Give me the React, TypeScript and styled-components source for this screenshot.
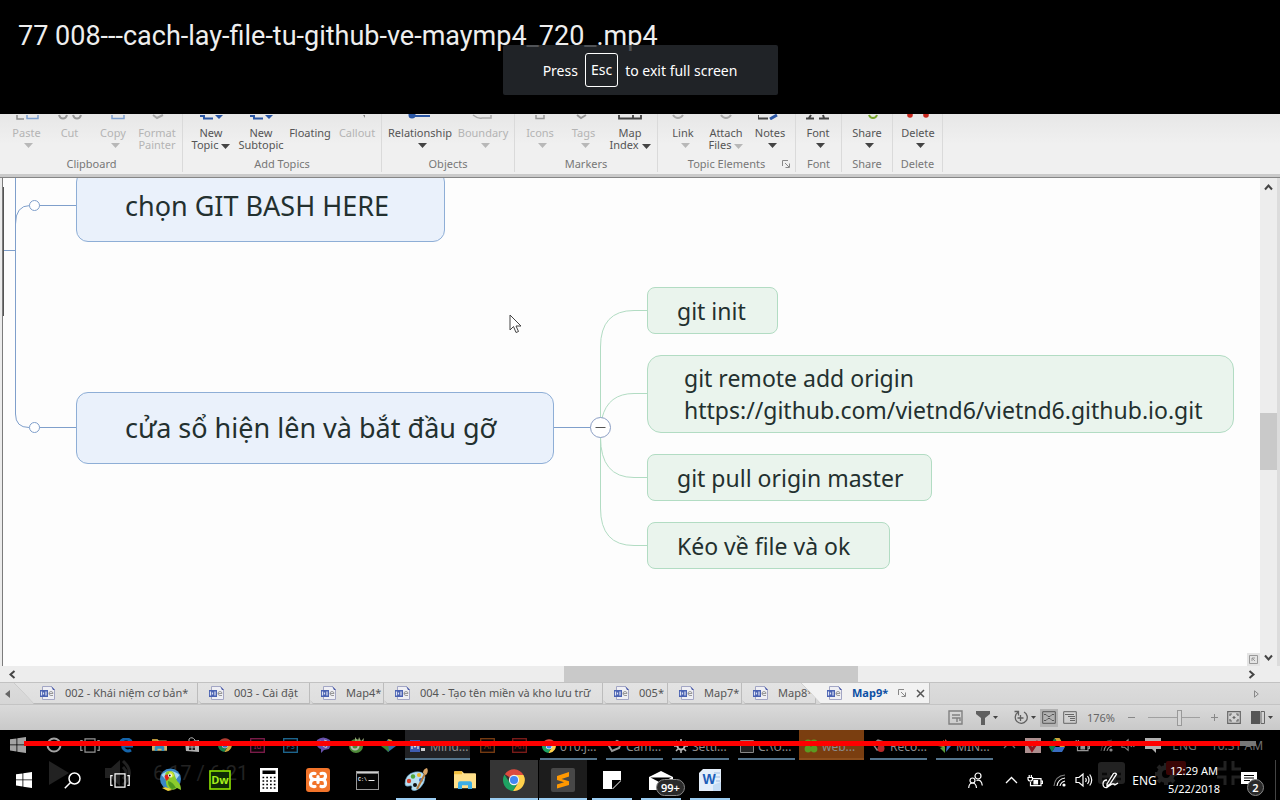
import React from 'react';
import styled, { createGlobalStyle } from 'styled-components';

const ui = '"Noto Sans", "Open Sans", sans-serif';

const GlobalStyle = createGlobalStyle`
  * { box-sizing: border-box; }
  body { margin: 0; background: #000; font-family: ${ui}; }
  button { font: inherit; color: inherit; border: 0; padding: 0; margin: 0; background: none; }
  svg { display: block; flex: none; }
`;

const Page = styled.div`
  display: flex;
  flex-direction: column;
  min-height: 100vh;
  overflow: hidden;
  background: #000;
  position: relative;
`;

const Header = styled.header`
  height: 114px;
  flex: none;
  padding: 16px 18px;
`;

const Title = styled.h1`
  margin: 0;
  font: 400 27px/40px Roboto, sans-serif;
  color: #eee;
  white-space: nowrap;
`;

const Toast = styled.div`
  position: absolute;
  top: 45px;
  left: 0;
  right: 0;
  margin: 0 auto;
  width: 275px;
  height: 50px;
  display: flex;
  align-items: center;
  justify-content: center;
  gap: 7px;
  border-radius: 2px;
  background: rgba(40, 44, 49, 0.8);
  color: #fff;
  font-size: 14px;
  white-space: nowrap;
`;

const Key = styled.kbd`
  font: inherit;
  line-height: 32px;
  padding: 0 5px;
  border: 1px solid #fff;
  border-radius: 3px;
`;

/* Ribbon */
const Ribbon = styled.div`
  display: flex;
  flex: none;
  height: 64px;
  padding-left: 1px;
  background: linear-gradient(#e7e7e7, #f0f0f0 30px);
  border-bottom: 1px solid #858585;
  box-shadow: inset 0 -3px #cacaca;
`;

const Group = styled.section<{ $w: number }>`
  width: ${p => p.$w}px;
  height: 58px;
  flex: none;
  border-right: 1px solid #dadada;
  display: flex;
  flex-direction: column;
  position: relative;
`;

const GroupRow = styled.div<{ $cols: string; $pad: number }>`
  display: grid;
  grid-template-columns: ${p => p.$cols};
  padding-left: ${p => p.$pad}px;
  height: 44px;
`;

const GroupName = styled.div`
  font-size: 11px;
  line-height: 12px;
  text-align: center;
  color: #777;
`;

const Tool = styled.button<{ $off?: boolean }>`
  display: flex;
  flex-direction: column;
  align-items: center;
  font-size: 11px;
  line-height: 12px;
  white-space: nowrap;
  color: ${p => (p.$off ? '#b4b4b4' : '#555')};
`;

const ToolTop = styled.svg`
  margin-bottom: 7px;
`;

const ToolLabel = styled.span`
  text-align: center;
`;

const InlineCaret = styled.span`
  display: inline-block;
  vertical-align: middle;
  padding-left: 3px;
`;

const CaretRow = styled.span`
  padding: 4px 0 0 4px;
`;

const Launcher = styled.button`
  position: absolute;
  right: 5px;
  bottom: 4px;
`;

const Caret = ({ off, small }: { off?: boolean; small?: boolean }) => (
  <svg width={small ? 5 : 9} height={small ? 3 : 5} viewBox="0 0 9 5" aria-hidden>
    <path d="M0 0h9L4.500 5z" fill={off ? '#b8b8b8' : '#444'} />
  </svg>
);

const tops: Record<string, React.ReactNode> = {
  Paste: <><path d="M2 0v4h7" stroke="#8c8c8c" strokeWidth="1.500" /><path d="M12 0v3.500h11V0" stroke="#7ea0cf" strokeWidth="1.500" /></>,
  Cut: <><path d="M1 0q1 3.500 4 3.500T9 0M15 0q1 3.500 4 3.500T23 0" stroke="#999" strokeWidth="2" /></>,
  Copy: <path d="M11 0v3.500h12V0" stroke="#7ea0cf" strokeWidth="1.500" />,
  Format: <path d="M8 0l4 3 6-3" stroke="#aaa" strokeWidth="2" />,
  New: <><path d="M1 1h3M5 0v3.500h9" stroke="#2b57a5" strokeWidth="2" /><path d="M16 0h8l-4 4z" fill="#2b57a5" /></>,
  Floating: null,
  Callout: <path d="M18 0l2 3V0z" fill="#888" />,
  Relationship: <><circle cx="4" cy="0" r="3.500" fill="#2b57a5" /><path d="M4 1h18" stroke="#2b57a5" strokeWidth="2" /></>,
  Boundary: <path d="M2 0q5 4 9 3h9V0" stroke="#aaa" strokeWidth="1.500" />,
  Icons: <path d="M8 0v3.500h8V0" stroke="#999" strokeWidth="1.500" />,
  Tags: <path d="M5 0l4 3 5-3" stroke="#999" strokeWidth="2" />,
  Map: <path d="M1 0v3.500h22V0M15 0v3" stroke="#444" strokeWidth="1.800" />,
  Link: <path d="M2 0q2 3 5 3t5-3" stroke="#aaa" strokeWidth="2" />,
  Attach: <path d="M7 0q2 3 5 3t5-3" stroke="#aaa" strokeWidth="2" />,
  Notes: <><path d="M0 0v3.500h10" stroke="#444" strokeWidth="1.800" /><path d="M12 4l7-4" stroke="#2b57a5" strokeWidth="3" /></>,
  Font: <path d="M0 3.500h8M3 3l2-3M13 3.500h10M18 3l-1-3" stroke="#444" strokeWidth="2" />,
  Share: <path d="M14 0q1 3 4 3t4-3" stroke="#76a52c" strokeWidth="2" />,
  Delete: <><circle cx="4" cy="0" r="2.800" fill="#c8281e" /><circle cx="20" cy="0" r="2.800" fill="#c8281e" /></>,
};

type ToolDef = { a: string; b?: string; off?: boolean; caret?: boolean; caretOff?: boolean };

const groups: { name: string; w: number; pad: number; cols: string; launcher?: boolean; tools: ToolDef[] }[] = [
  { name: 'Clipboard', w: 182, pad: 4, cols: '43px 43px 44px 44px', tools: [
    { a: 'Paste', off: true, caret: true }, { a: 'Cut', off: true },
    { a: 'Copy', off: true, caret: true }, { a: 'Format', b: 'Painter', off: true }] },
  { name: 'Add Topics', w: 199, pad: 3, cols: '50px 50px 48px 46px', tools: [
    { a: 'New', b: 'Topic', caret: true }, { a: 'New', b: 'Subtopic' },
    { a: 'Floating' }, { a: 'Callout', off: true }] },
  { name: 'Objects', w: 133, pad: 6, cols: '64px 62px', tools: [
    { a: 'Relationship', caret: true }, { a: 'Boundary', off: true, caret: true }] },
  { name: 'Markers', w: 143, pad: 3, cols: '44px 43px 50px', tools: [
    { a: 'Icons', off: true, caret: true }, { a: 'Tags', off: true, caret: true },
    { a: 'Map', b: 'Index', caret: true }] },
  { name: 'Topic Elements', w: 138, pad: 5, cols: '40px 46px 42px', launcher: true, tools: [
    { a: 'Link', caret: true, caretOff: true }, { a: 'Attach', b: 'Files', caret: true, caretOff: true },
    { a: 'Notes', caret: true }] },
  { name: 'Font', w: 46, pad: 0, cols: '44px', tools: [{ a: 'Font', caret: true }] },
  { name: 'Share', w: 51, pad: 1, cols: '48px', tools: [{ a: 'Share', caret: true }] },
  { name: 'Delete', w: 50, pad: 1, cols: '48px', tools: [{ a: 'Delete', caret: true }] },
];

const LaunchIcon = () => (
  <svg width="8" height="8" viewBox="0 0 8 8" fill="none" stroke="#888" aria-hidden>
    <path d="M.5 6V.5H6M3 3l4 4M7.500 3.500v4h-4" />
  </svg>
);

/* Map area */
const Workspace = styled.div`
  flex: 1 0 488px;
  display: flex;
  background: #ececec;
  padding-left: 2px;
  border-right: 3px solid #dcdcdc;
`;

const Canvas = styled.main`
  flex: 1;
  min-width: 0;
  position: relative;
  overflow: hidden;
  background: #fdfdfd;
  border-left: 1px solid #7c7c7c;
`;

const Links = styled.svg`
  position: absolute;
  top: 0;
  left: 0;
`;

const Node = styled.div<{ $x: number; $y: number; $w: number; $h: number; $green?: boolean; $r?: number }>`
  position: absolute;
  left: ${p => p.$x}px;
  top: ${p => p.$y}px;
  width: ${p => p.$w}px;
  height: ${p => p.$h}px;
  display: flex;
  align-items: center;
  padding-left: ${p => (p.$green ? (p.$r ? 36 : 29) : 48)}px;
  white-space: pre;
  color: #23302f;
  font-size: ${p => (p.$green ? 23 : 27)}px;
  line-height: 32px;
  background: ${p => (p.$green ? '#eaf4ed' : '#eaf1fb')};
  border: 1px solid ${p => (p.$green ? '#b2dcc3' : '#8eaed6')};
  border-radius: ${p => p.$r ?? (p.$green ? 8 : 12)}px;
`;

const Cursor = styled.svg`
  position: absolute;
  left: 506px;
  top: 136px;
`;

const MapCorner = styled.div`
  position: absolute;
  right: 0;
  bottom: 0;
  padding: 2px;
  background: #e4e4e4;
`;

const VScroll = styled.div`
  width: 17px;
  display: flex;
  flex-direction: column;
  background: #ededed;
`;

const HScroll = styled.div`
  flex: none;
  height: 17px;
  display: flex;
  padding: 0 20px 0 3px;
  background: #ededed;
  border-bottom: 1px solid #c2c2c2;
`;

const ScrollButton = styled.button`
  flex: 0 0 18px;
  display: flex;
  align-items: center;
  justify-content: center;
`;

const Track = styled.div<{ $g: number; $thumb?: boolean }>`
  flex: ${p => p.$g} 1 0;
  background: ${p => (p.$thumb ? '#c9c9c9' : 'transparent')};
`;

const Chevron = ({ turn }: { turn: number }) => (
  <svg width="9" height="9" viewBox="0 0 9 9" aria-hidden>
    <path d="M1 6.500l3.500-4 3.500 4" fill="none" stroke="#444" strokeWidth="2" transform={`rotate(${turn} 4.500 4.500)`} />
  </svg>
);

/* Document tabs */
const TabStrip = styled.nav`
  flex: none;
  height: 22px;
  display: flex;
  background: linear-gradient(#dcdcdc, #d6d6d6);
  border-bottom: 1px solid #c4c4c4;
`;

const TabArrow = styled.button`
  width: 14px;
  display: flex;
  align-items: center;
  justify-content: center;
`;

const Tab = styled.button<{ $w: number; $slant?: boolean; $active?: boolean }>`
  width: ${p => p.$w}px;
  height: 21px;
  flex: none;
  display: flex;
  align-items: center;
  gap: 10px;
  padding-left: ${p => (p.$slant ? 26 : 11)}px;
  margin-left: ${p => (p.$active ? -15 : 0)}px;
  position: relative;
  font-size: 11px;
  line-height: 16px;
  font-weight: ${p => (p.$active ? 700 : 400)};
  color: ${p => (p.$active ? '#0c50a4' : '#555')};
  white-space: nowrap;
  background: linear-gradient(${p => (p.$active ? '#f2f2f2, #f2f2f2' : '#e3e3e3, #dedede')});
  border-right: 1px solid #bcbcbc;
  border-bottom: 1px solid #b8b8b8;
  clip-path: polygon(0 0, 100% 0, 100% 100%, ${p => (p.$slant ? 20 : 3)}px 100%, 0 ${p => (p.$slant ? 0 : 17)}px);
`;

const Slant = styled.svg`
  position: absolute;
  left: 0;
  top: 0;
`;

const TabSpacer = styled.div`flex: 1;`;

const TabEnd = styled.div`width: 17px;`;

const DocIcon = () => (
  <svg width="15" height="16" viewBox="0 0 15 16" aria-hidden>
    <path d="M2.500 1.500h9l3 3v10h-12z" fill="#efeff4" stroke="#a3a6c4" />
    <path d="M11 1l4 4h-2z" fill="#4657a8" />
    <rect x="0" y="5" width="8" height="7" fill="#4a62b2" />
    <path d="M1.500 6.500v4M3.500 7.500v2M6 6.500v4" stroke="#dfe4f5" strokeWidth="1.200" />
    <path d="M9 8.500h4q0-2-2-2t-2 2 2 2h2" fill="none" stroke="#999" />
  </svg>
);

const tabs: { label: string; w: number; slant?: boolean }[] = [
  { label: '002 - Khái niệm cơ bản*', w: 184, slant: true },
  { label: '003 - Cài đặt', w: 112 },
  { label: 'Map4*', w: 74 },
  { label: '004 - Tạo tên miền và kho lưu trữ', w: 219 },
  { label: '005*', w: 65 },
  { label: 'Map7*', w: 74 },
  { label: 'Map8*', w: 74 },
];

const ActiveTools = styled.span`
  display: flex;
  align-items: center;
  gap: 10px;
`;

/* Status bar */
const StatusBar = styled.footer`
  flex: none;
  height: 25px;
  display: flex;
  align-items: center;
  justify-content: flex-end;
  padding-right: 2px;
  color: #666;
  font-size: 11px;
  background: linear-gradient(#dadada, #c9c9c9);
`;

const StatusButton = styled.button<{ $w: number; $on?: boolean }>`
  width: ${p => p.$w}px;
  height: 18px;
  display: flex;
  align-items: center;
  justify-content: center;
  gap: 3px;
  background: ${p => (p.$on ? '#b2b2b2' : 'none')};
`;

const Zoom = styled.input`
  appearance: none;
  width: 52px;
  height: 16px;
  margin: 0 6px;
  background: linear-gradient(#a0a0a0, #a0a0a0) center / 100% 1px no-repeat;
  &::-webkit-slider-thumb {
    appearance: none;
    width: 5px;
    height: 16px;
    border: 1px solid #999;
    background: #d6d6d6;
  }
`;

/* Recorded taskbar and seek bar */
const InnerBar = styled.div`
  flex: none;
  height: 30px;
  display: flex;
  position: relative;
  font-size: 13px;
  color: #8c8c8c;
`;

const InnerIcon = styled.span<{ $w: number }>`
  width: ${p => p.$w}px;
  height: 30px;
  flex: none;
  display: flex;
  align-items: center;
  justify-content: center;
  opacity: 0.8;
`;

const Pinned = styled.div`
  flex: 0 0 262px;
  display: flex;
  justify-content: space-around;
  margin-left: -1px;
`;

const Task = styled.div<{ $bg?: string; $full?: boolean }>`
  flex: none;
  width: ${p => (p.$full ? 65 : 57)}px;
  margin: ${p => (p.$full ? '0 1px 0 0' : '0 4px 0 5px')};
  height: 30px;
  display: flex;
  align-items: center;
  gap: 4px;
  padding-left: ${p => (p.$full ? 5 : 2)}px;
  padding-top: 4px;
  overflow: hidden;
  white-space: nowrap;
  font-size: 12px;
  background: ${p => p.$bg ?? 'transparent'};
  border-bottom: 2px solid ${p => (p.$bg === '#7a3e10' ? '#8a4d1c' : '#54748c')};
`;

const InnerTray = styled.div`
  margin-left: auto;
  display: flex;
  align-items: center;
  padding-right: 16px;
  font-size: 12px;
`;

const Seek = styled.input`
  appearance: none;
  position: absolute;
  left: 24px;
  right: 24px;
  top: 11px;
  width: calc(100% - 48px);
  height: 5px;
  margin: 0;
  background: linear-gradient(90deg, #f00 98.700%, #777 98.700%);
  &::-webkit-slider-thumb { appearance: none; width: 1px; height: 5px; background: transparent; }
`;

/* Taskbar */
const Taskbar = styled.nav`
  flex: none;
  height: 40px;
  display: flex;
  position: relative;
  color: #fff;
`;

const Ghost = styled.div`
  position: absolute;
  inset: 0;
  display: flex;
  align-items: center;
  padding: 0 39px 14px 49px;
  font: 400 20px/24px Roboto, sans-serif;
  color: #222;
`;

const GhostVolume = styled.svg`
  margin: 0 20px 0 36px;
`;

const GhostTime = styled.span`
  flex: 1;
`;

const GhostControls = styled.span`
  display: flex;
  align-items: center;
  gap: 29px;
`;

const AppButton = styled.button<{ $bg?: string; $line?: 'short' | 'full'; $first?: boolean }>`
  position: relative;
  width: 48px;
  height: 40px;
  flex: none;
  display: flex;
  align-items: center;
  justify-content: center;
  margin-right: ${p => (p.$first ? 0 : 1)}px;
  background-color: ${p => p.$bg ?? 'transparent'};
  background-image: ${p => (p.$line ? 'linear-gradient(#9bcdf2, #9bcdf2)' : 'none')};
  background-repeat: no-repeat;
  background-position: bottom;
  background-size: ${p => (p.$line === 'full' ? 48 : 40)}px 2px;
`;

const AppGroup = styled.div`
  position: relative;
  display: flex;
  margin-left: 3px;
`;

const Badge = styled.span<{ $x: number; $y: number }>`
  position: absolute;
  left: ${p => p.$x}px;
  top: ${p => p.$y}px;
  min-width: 17px;
  height: 17px;
  padding: 0 4px;
  border: 1px solid #888;
  border-radius: 9px;
  background: #2a2a2a;
  color: #fff;
  font-size: 11px;
  line-height: 15px;
  font-weight: 600;
  text-align: center;
`;

const Tray = styled.div`
  position: relative;
  margin-left: auto;
  display: flex;
  align-items: center;
  font-size: 12px;
`;

const TrayItem = styled.button<{ $w: number }>`
  position: relative;
  width: ${p => p.$w}px;
  height: 40px;
  display: flex;
  align-items: center;
  justify-content: center;
`;

const Clock = styled.button`
  width: 58px;
  font-size: 11px;
  line-height: 18px;
  text-align: center;
  white-space: nowrap;
`;

const ShowDesktop = styled.button`
  width: 5px;
  height: 40px;
  border-left: 1px solid #444;
`;

/* Drawings */
const WinLogo = ({ s, c }: { s: number; c: string }) => (
  <svg width={s} height={s} viewBox="0 0 16 16" fill={c} aria-hidden>
    <path d="M0 2.300l6.500-.9v6.100H0zM7.300 1.300L16 0v7.500H7.300zM0 8.300h6.500v6.200L0 13.600zM7.300 8.300H16V16l-8.700-1.300z" />
  </svg>
);

const TaskView = ({ s, c }: { s: number; c: string }) => (
  <svg width={s} height={s * 0.75} viewBox="0 0 20 15" fill="none" stroke={c} strokeWidth="1.200" aria-hidden>
    <path d="M5 .8h10v13.400H5zM2.700 2.600H.8v9.800h1.900M17.300 2.600h1.900v9.800h-1.900" />
  </svg>
);

const Chrome = ({ s }: { s: number }) => (
  <svg width={s} height={s} viewBox="0 0 24 24" aria-hidden>
    <path d="M12 12L2 5.600A12 12 0 0122.400 6.500H12z" fill="#dd4b3e" />
    <path d="M1.600 6A12 12 0 0011 24l5.200-9.500-4.200-2.500-4.800 2.700z" fill="#1ea362" />
    <path d="M12 6.500h10.400A12 12 0 0111 24l5.700-9.300z" fill="#ffd04b" />
    <circle cx="12" cy="12" r="5.600" fill="#f4f4f4" />
    <circle cx="12" cy="12" r="4.400" fill="#4387f2" />
  </svg>
);

const Folder = ({ s }: { s: number }) => (
  <svg width={s} height={s * 0.84} viewBox="0 0 22 18" aria-hidden>
    <path d="M0 1q0-1 1-1h7l2 2h11q1 0 1 1v14H0z" fill="#ffe08a" />
    <path d="M0 1q0-1 1-1h7v3H0z" fill="#f2bf3d" />
    <path d="M4 18v-6q0-2 2-2h10q2 0 2 2v6h-4v-4H8v4z" fill="#3caee6" />
  </svg>
);

const Speaker = ({ s = 18, c = '#fff', mute }: { s?: number; c?: string; mute?: boolean }) => (
  <svg width={s} height={s} viewBox="0 0 18 18" fill="none" stroke={c} strokeWidth="1.200" aria-hidden>
    <path d="M1 6.500h3L8 3v12l-4-3.500H1z" />
    {mute ? <path d="M11 7l4 4m0-4l-4 4" /> : <path d="M10.500 7q1.500 2 0 4M12.500 5q3 4 0 8M14.700 3.500q4 5.500 0 11" />}
  </svg>
);

const Wifi = ({ c = '#fff' }: { c?: string }) => (
  <svg width="13" height="13" viewBox="0 0 13 13" fill="none" stroke={c} strokeWidth="1.100" aria-hidden>
    <path d="M1 12Q2 2 12 1" opacity=".5" /><path d="M4 12q1-7 8-8M7 12q.8-4 5-5" /><circle cx="11" cy="11" r="1.600" fill={c} stroke="none" />
  </svg>
);

const LetterTile = ({ t, c }: { t: string; c: string }) => (
  <svg width="15" height="15" viewBox="0 0 15 15" aria-hidden>
    <rect x=".7" y=".7" width="13.600" height="13.600" fill="#0c0608" stroke={c} strokeWidth="1.300" />
    <text x="7.500" y="10.500" fontSize="8" fill={c} textAnchor="middle" fontFamily="Noto Sans, sans-serif">{t}</text>
  </svg>
);

const Battery = ({ c = '#fff' }: { c?: string }) => (
  <svg width="16" height="13" viewBox="0 0 16 13" fill="none" stroke={c} strokeWidth="1.200" aria-hidden>
    <path d="M5 4.600h9v7H3.500V8M14 7h1.500v2.500H14" /><path d="M7 6.500h3.500v3.300H7z" fill={c} />
    <path d="M1 3.500h4.500V5q0 2-2.200 2T1 5zM2.200 3V1M4.400 3V1" />
  </svg>
);

const ChevUp = ({ c }: { c: string }) => (
  <svg width="13" height="8" viewBox="0 0 13 8" aria-hidden><path d="M1 7l5.500-5.500L12 7" fill="none" stroke={c} strokeWidth="1.300" /></svg>
);

const Parrot = () => (
  <svg width="24" height="24" viewBox="0 0 24 24" aria-hidden>
    <circle cx="11.500" cy="11" r="10.500" fill="#3b86c4" /><path d="M2.500 7q8-8 18 0l-3 4H6z" fill="#a8d8f2" />
    <path d="M6 8q0-5 5-5 4 0 5 5l2 5q4 3 4 9l-4-2q-3 3-7 1-4-2-4-7z" fill="#8ccc2c" />
    <path d="M9 13q5 1 8 7l-4 1q-4-2-4-8z" fill="#4e9a1e" />
    <path d="M10 4q4-1 5 4l-3 2q-2-2-2-6z" fill="#d5e83c" />
    <path d="M5.500 9q0-3 3-2.500 2.500 1.500 1 4.500l-2 2z" fill="#e2231a" /><circle cx="11" cy="7.500" r="1.900" fill="#fff" /><circle cx="10.800" cy="7.500" r=".9" fill="#111" />
    <path d="M3 20q5-2 10 2l-4 1z" fill="#f0d23c" />
  </svg>
);

const Dreamweaver = () => (
  <svg width="22" height="20" viewBox="0 0 22 20" aria-hidden>
    <rect x="1" y="1" width="20" height="18" fill="#0f2b06" stroke="#8fe600" strokeWidth="1.600" />
    <text x="11" y="14" fontSize="11" fontWeight="700" fill="#a4f01c" textAnchor="middle" fontFamily="Open Sans, sans-serif">Dw</text>
  </svg>
);

const Calc = () => (
  <svg width="18" height="24" viewBox="0 0 18 24" aria-hidden>
    <rect width="18" height="24" fill="#fff" /><rect x="2.500" y="2.500" width="13" height="3.500" fill="#000" />
    <path d="M2.500 9.500h13M2.500 13h13M2.500 16.500h13M2.500 20h13" stroke="#000" strokeWidth="1.700" strokeDasharray="1.700 2.060" />
  </svg>
);

const Xampp = () => (
  <svg width="24" height="24" viewBox="0 0 24 24" aria-hidden>
    <rect width="24" height="24" rx="3" fill="#f2742a" />
    <path d="M9 5.500q-4.500-.5-4.500 2.500T8 11.500h8q3.500 0 3.500-3.500T15 5.500M9 18.500q-4.500.5-4.500-3T8 11.500h8q3.500 0 3.500 4t-4.500 3M12 8.500v6" fill="none" stroke="#fff" strokeWidth="3.200" strokeLinecap="round" />
  </svg>
);

const Cmd = () => (
  <svg width="23" height="19" viewBox="0 0 23 19" aria-hidden>
    <rect x=".5" y=".5" width="22" height="18" fill="#050505" stroke="#999" /><path d="M1 1.800h21" stroke="#ddd" strokeWidth="1.500" />
    <text x="2" y="9.500" fontSize="5" fontWeight="700" fill="#eee" fontFamily="Liberation Mono, monospace">C:\</text><path d="M12.500 9.500h6" stroke="#eee" />
  </svg>
);

const Paint = () => (
  <svg width="24" height="24" viewBox="0 0 24 24" aria-hidden>
    <path d="M1 16Q1 6 11 4q9-1 10 5 0 6-5 11-5 4-8 2-1-1 0-3 0-2-3-1-4 1-4-2z" fill="#b9dff2" stroke="#5b9cc4" strokeWidth=".6" />
    <circle cx="5" cy="13" r="2.200" fill="#d8402b" /><circle cx="9" cy="8.500" r="2.200" fill="#50a83c" /><circle cx="15" cy="7" r="2.100" fill="#f0b428" /><circle cx="17" cy="12" r="2" fill="#3a62c8" /><circle cx="11" cy="17" r="2" fill="#111" />
    <path d="M13 21L22 4" stroke="#b47a3c" strokeWidth="2" /><path d="M19 5q0-4 4-5 2 4-1 7z" fill="#d8a468" />
  </svg>
);

const Sublime = () => (
  <svg width="24" height="24" viewBox="0 0 24 24" aria-hidden>
    <rect width="24" height="24" rx="2" fill="#474747" />
    <path d="M6 8l12-4v4.500L10.500 11l7.500 2.300V17L6 20.500V16.500l7-2.200-7-2.300z" fill="#ff9800" />
  </svg>
);

const Sticky = () => (
  <svg width="18" height="18" viewBox="0 0 18 18" aria-hidden>
    <path d="M0 0h18v18H0z" fill="#fff" /><path d="M9 18V9h9z" fill="#000" /><path d="M10 18l8-8v8z" fill="#000" />
  </svg>
);

const Mail = () => (
  <svg width="24" height="19" viewBox="0 0 24 19" aria-hidden><path d="M0 6l12-6 12 6v13H0z" fill="#fff" /><path d="M1.500 6.500h21L12 12z" fill="#000" /></svg>
);

const Word = () => (
  <svg width="22" height="22" viewBox="0 0 22 22" aria-hidden>
    <path d="M4 0h18v22H0V4z" fill="#e4eefa" /><path d="M15 4h6M16 8h5M17 12h4" stroke="#9cbbe2" />
    <path d="M14 16l8-3v9h-8z" fill="#c5dcf4" />
    <text x="10" y="15" fontSize="14" fontWeight="700" fill="#1c5db8" textAnchor="middle" fontFamily="Liberation Sans, sans-serif">W</text>
  </svg>
);

const innerPins: React.ReactNode[] = [
  <Folder s={15} />,
  <svg width="14" height="16" viewBox="0 0 14 16"><path d="M0 5l14-2v12L1 14z" fill="#ddd" /><path d="M4 5V2q3-3 6 1v1" fill="none" stroke="#ddd" /><path d="M4 7h2.500v2.500H4zM7.500 7H10v2.500H7.500zM4 10.500h2.500V13H4zM7.500 10.500H10V13H7.500z" fill="#222" /></svg>,
  <Chrome s={14} />,
  <LetterTile t="Id" c="#a02460" />,
  <LetterTile t="Ps" c="#2585b8" />,
  <svg width="15" height="16" viewBox="0 0 15 16"><path d="M1 3q6-5 13 0 2 5-1 9l-5 1-3 3v-4Q-1 10 1 3z" fill="#8166d8" /><path d="M4 4q1 5 6 7l1-2-3-1-2-3zM8 3q4 0 4 4" fill="none" stroke="#eee" /></svg>,
  <svg width="16" height="16" viewBox="0 0 16 16"><circle cx="8" cy="9" r="7" fill="#62ad48" /><circle cx="7" cy="9" r="3.500" fill="none" stroke="#e0efdc" strokeWidth="2" /><path d="M7 0l3 4 1-4 2 4 3-3-1 6H7z" fill="#b8cf92" /></svg>,
  <svg width="15" height="15" viewBox="0 0 15 15"><path d="M2 8l5-7 5 2 3 5-8 6z" fill="#4187d0" /><path d="M7 1l4 1-2 5z" fill="#e8cf46" /><path d="M0 8l7-2 1 8z" fill="#4ea63a" /></svg>,
];

export default function App() {
  return (
    <Page>
      <GlobalStyle />
      <Header>
        <Title>77 008---cach-lay-file-tu-github-ve-maymp4_720_.mp4</Title>
      </Header>
      <Toast role="status"><span>Press</span><Key>Esc</Key><span>to exit full screen</span></Toast>

      <Ribbon>
        {groups.map(g => (
          <Group key={g.name} $w={g.w}>
            <GroupRow $cols={g.cols} $pad={g.pad}>
              {g.tools.map(t => (
                <Tool key={t.a + (t.b ?? '')} $off={t.off}>
                  <ToolTop width="24" height="6" viewBox="0 -1 24 6" fill="none" aria-hidden>{tops[t.a]}</ToolTop>
                  <ToolLabel>
                    {t.a}
                    {t.b && <><br />{t.b}</>}
                    {t.b && t.caret && <InlineCaret><Caret off={t.off || t.caretOff} /></InlineCaret>}
                  </ToolLabel>
                  {!t.b && t.caret && <CaretRow><Caret off={t.off || t.caretOff} /></CaretRow>}
                </Tool>
              ))}
            </GroupRow>
            <GroupName>{g.name}</GroupName>
            {g.launcher && <Launcher aria-label="More topic elements"><LaunchIcon /></Launcher>}
          </Group>
        ))}
      </Ribbon>

      <Workspace>
        <Canvas>
          <Links width="660" height="400" viewBox="3 178 660 400" fill="none">
            <g stroke="#7f9fcb">
              <path d="M15.500 178V414Q15.500 427.500 29 427.500M15.500 224Q15.500 205.500 30 205.500M3 250.500h12.500M39 205.500h37M39 427.500h37M553 427.500h38" />
              <circle cx="34.500" cy="205.500" r="5" fill="#fff" /><circle cx="34.500" cy="427.500" r="5" fill="#fff" />
            </g>
            <g stroke="#b2dcc3">
              <path d="M600.500 418V347Q600.500 310.500 634 310.500H647M602 418Q608 393.500 634 393.500H647M600.500 437Q600.500 477.500 634 477.500H647M600.500 437V508Q600.500 545.500 634 545.500H647" />
            </g>
            <path d="M3.500 187V316" stroke="#555" />
            <circle cx="600.500" cy="427.500" r="10" fill="#fff" stroke="#8b9ec4" />
            <path d="M595.500 427.500h10" stroke="#555" />
          </Links>
          <Node $x={73} $y={-8} $w={369} $h={72}>chọn GIT BASH HERE</Node>
          <Node $x={73} $y={214} $w={478} $h={72}>cửa sổ hiện lên và bắt đầu gỡ</Node>
          <Node $green $x={644} $y={109} $w={131} $h={47}>git init</Node>
          <Node $green $r={14} $x={644} $y={177} $w={587} $h={78}>{'git remote add origin\nhttps://github.com/vietnd6/vietnd6.github.io.git'}</Node>
          <Node $green $x={644} $y={276} $w={285} $h={47}>git pull origin master</Node>
          <Node $green $x={644} $y={344} $w={243} $h={47}>Kéo về file và ok</Node>
          <Cursor width="13" height="20" viewBox="0 0 13 20" aria-hidden>
            <path d="M1 1v15l3.500-3.500 2.500 6 2.500-1-2.500-5.500H12z" fill="#fff" stroke="#444" />
          </Cursor>
          <MapCorner>
            <svg width="9" height="9" viewBox="0 0 9 9" fill="none" stroke="#999"><path d="M.5.5h8v8h-8zM3 6V3h3M3 3l3 3" /></svg>
          </MapCorner>
        </Canvas>
        <VScroll>
          <ScrollButton aria-label="Scroll up"><Chevron turn={0} /></ScrollButton>
          <Track $g={217} /><Track $g={57} $thumb /><Track $g={178} />
          <ScrollButton aria-label="Scroll down"><Chevron turn={180} /></ScrollButton>
        </VScroll>
      </Workspace>
      <HScroll>
        <ScrollButton aria-label="Scroll left"><Chevron turn={-90} /></ScrollButton>
        <Track $g={543} /><Track $g={294} $thumb /><Track $g={384} />
        <ScrollButton aria-label="Scroll right"><Chevron turn={90} /></ScrollButton>
      </HScroll>

      <TabStrip>
        <TabArrow aria-label="Previous maps"><svg width="5" height="8" viewBox="0 0 5 8"><path d="M5 0v8L0 4z" fill="#666" /></svg></TabArrow>
        {tabs.map(t => (
          <Tab key={t.label} $w={t.w} $slant={t.slant}>
            <Slant width="20" height="21" viewBox="0 0 20 21" fill="none" stroke="#bbb">
              <path d={t.slant ? 'M0 0l20 21' : 'M0 17.500l3.500 3.500'} />
            </Slant>
            <DocIcon />{t.label}
          </Tab>
        ))}
        <Tab $w={129} $slant $active>
          <Slant width="20" height="21" viewBox="0 0 20 21" fill="none" stroke="#bbb"><path d="M0 0l20 21" /></Slant>
          <DocIcon />Map9*
          <ActiveTools>
            <LaunchIcon />
            <svg width="9" height="9" viewBox="0 0 9 9"><path d="M1 1l7 7M8 1L1 8" stroke="#555" strokeWidth="1.500" /></svg>
          </ActiveTools>
        </Tab>
        <TabSpacer />
        <TabArrow aria-label="Next maps"><svg width="5" height="8" viewBox="0 0 5 8"><path d="M.5.8v6.400L4.300 4z" fill="none" stroke="#888" /></svg></TabArrow>
        <TabEnd />
      </TabStrip>

      <StatusBar>
        <StatusButton $w={22} aria-label="Notes pane">
          <svg width="15" height="15" viewBox="0 0 15 15" fill="none" stroke="#808080" strokeWidth="1.400"><path d="M1 1h13v13H1zM4 5h8M4 8h5v4M8 8h4v3" /></svg>
        </StatusButton>
        <StatusButton $w={42} aria-label="Filter">
          <svg width="14" height="14" viewBox="0 0 14 14" fill="#606060"><path d="M0 0h14v3L9 7v7H5V7L0 3z" /></svg><Caret small />
        </StatusButton>
        <StatusButton $w={32} aria-label="Add">
          <svg width="15" height="15" viewBox="0 0 15 15" fill="none" stroke="#606060" strokeWidth="1.300"><path d="M5 2.300a6 6 0 106-.3M7.500 5v6M4.500 8h6M1.500 1.500H5.500V5.500" /></svg><Caret small />
        </StatusButton>
        <StatusButton $w={18} $on aria-label="Map view">
          <svg width="14" height="13" viewBox="0 0 14 13" fill="none" stroke="#555"><path d="M.7.7h12.600v11.600H.7zM2 3.500h2l2 2h2l2-2h2M2 9.500h2l2-2h2l2 2h2" /></svg>
        </StatusButton>
        <StatusButton $w={24} aria-label="Outline view">
          <svg width="14" height="13" viewBox="0 0 14 13" fill="none" stroke="#666"><path d="M.7.7h12.600v11.600H.7zM2 3.500h9M5 5.500h7M7 7.500h5M7 9.500h5" /></svg>
        </StatusButton>
        <StatusButton $w={38}>176%</StatusButton>
        <StatusButton $w={22} aria-label="Zoom out"><svg width="7" height="7"><path d="M0 3.500h7" stroke="#888" /></svg></StatusButton>
        <Zoom type="range" min={0} max={100} defaultValue={62} aria-label="Zoom" />
        <StatusButton $w={16} aria-label="Zoom in"><svg width="7" height="7"><path d="M0 3.500h7M3.500 0v7" stroke="#888" /></svg></StatusButton>
        <StatusButton $w={24} aria-label="Fit map">
          <svg width="14" height="13" viewBox="0 0 14 13" fill="none" stroke="#666" strokeWidth="1.200"><path d="M.7.7h12.600v11.600H.7zM3 5V3h2M9 3h2v2M3 8v2h2M9 10h2V8M7 5v3M5.500 6.500h3" /></svg>
        </StatusButton>
        <StatusButton $w={32} aria-label="Task panes">
          <svg width="14" height="13" viewBox="0 0 14 13"><path d="M0 0h9v13H0z" fill="#555" /><path d="M10 .5h3.500v12H10z" fill="none" stroke="#666" /></svg><Caret small />
        </StatusButton>
      </StatusBar>

      <InnerBar>
        <InnerIcon $w={36}><WinLogo s={16} c="#ccc" /></InnerIcon>
        <InnerIcon $w={36}><svg width="16" height="16" viewBox="0 0 16 16"><circle cx="8" cy="8" r="6.500" fill="none" stroke="#ccc" strokeWidth="2" /></svg></InnerIcon>
        <InnerIcon $w={36}><TaskView s={20} c="#bbb" /></InnerIcon>
        <InnerIcon $w={36}>
          <svg width="14" height="15" viewBox="0 0 14 15"><path d="M12 12q-3 2-6 0-3-2-2-4h9Q13 1 7 1 2 1 1 6" fill="none" stroke="#1b7fd6" strokeWidth="3" /></svg>
        </InnerIcon>
        <Pinned>{innerPins.map((p, i) => <InnerIcon key={i} $w={32}>{p}</InnerIcon>)}</Pinned>
        <Task $full $bg="#212225">
          <svg width="16" height="14" viewBox="0 0 16 14"><path d="M0 1h10v12H0z" fill="#3f5cb0" /><path d="M2 10V4l3 4 3-4v6" fill="none" stroke="#ddd" strokeWidth="1.300" /><path d="M11 4h4v3h-4zM11 9h4v3h-4z" fill="#ccc" /></svg>Mind...
        </Task>
        <InnerIcon $w={32}><LetterTile t="Ai" c="#9a4d18" /></InnerIcon>
        <InnerIcon $w={32}><LetterTile t="An" c="#a02420" /></InnerIcon>
        <Task><Chrome s={14} />010.j...</Task>
        <Task><svg width="14" height="14" viewBox="0 0 14 14"><path d="M1 7l8-5 4 2-2 5-7 3z" fill="none" stroke="#999" strokeWidth="2" /></svg>Cam...</Task>
        <Task><svg width="14" height="14" viewBox="0 0 14 14"><circle cx="7" cy="7" r="3.500" fill="none" stroke="#bbb" strokeWidth="2" /><path d="M7 0v3M7 11v3M0 7h3M11 7h3M2 2l2 2M10 10l2 2M12 2l-2 2M4 10l-2 2" stroke="#bbb" strokeWidth="1.500" /></svg>Setti...</Task>
        <Task><svg width="14" height="13" viewBox="0 0 14 13"><path d="M.5.5h13v12H.5z" fill="#222" stroke="#888" /><path d="M1 2h12" stroke="#ccc" /></svg>C:\U...</Task>
        <Task $full $bg="#7a3e10"><svg width="14" height="14" viewBox="0 0 14 14" fill="#5c9a22"><circle cx="4" cy="4" r="3.400" /><circle cx="10" cy="4" r="3.400" /><circle cx="4" cy="10" r="3.400" /><circle cx="10" cy="10" r="3.400" /></svg>web...</Task>
        <Task><svg width="14" height="14" viewBox="0 0 14 14"><path d="M1 5l5-4 6 2-1 7-6 1z" fill="none" stroke="#888" strokeWidth="1.500" /><circle cx="9" cy="9.500" r="3.500" fill="#b52a2a" /></svg>Reco...</Task>
        <Task><svg width="14" height="14" viewBox="0 0 14 14"><path d="M7 0l4 4-4 3z" fill="#c84a3c" /><path d="M0 7l6-6v7z" fill="#d8a03a" /><path d="M7 14l-5-5 5-2z" fill="#5aa03c" /><path d="M8 13l5-6-4-2z" fill="#3c6ec8" /></svg>MIN...</Task>
        <InnerTray>
          <InnerIcon $w={24}><ChevUp c="#888" /></InnerIcon>
          <InnerIcon $w={24}><svg width="16" height="15" viewBox="0 0 16 15"><path d="M0 0h16v15H0z" fill="#d9b3b3" /><path d="M3 5l4 7 6-9" fill="none" stroke="#b01e28" strokeWidth="3" /></svg></InnerIcon>
          <InnerIcon $w={24}><svg width="16" height="14" viewBox="0 0 16 14"><path d="M5.500 0h5L16 9h-5z" fill="#ffcf48" /><path d="M5.500 0L0 9l3 5 5.500-9z" fill="#1aa15f" /><path d="M6 9h10l-3 5H3z" fill="#4688f0" /></svg></InnerIcon>
          <InnerIcon $w={25}><Battery c="#bbb" /></InnerIcon>
          <InnerIcon $w={24}><Wifi c="#aaa" /></InnerIcon>
          <InnerIcon $w={22}><Speaker s={16} c="#aaa" mute /></InnerIcon>
          <InnerIcon $w={26}><svg width="16" height="15" viewBox="0 0 16 15"><path d="M0 0h16v11h-5v4l-4-4H0z" fill="#ddd" /></svg></InnerIcon>
          <InnerIcon $w={37}>ENG</InnerIcon>
          <InnerIcon $w={68}>10:31 AM</InnerIcon>
        </InnerTray>
        <Seek type="range" min={0} max={381} defaultValue={377} aria-label="Seek" />
      </InnerBar>

      <Taskbar>
        <Ghost>
          <svg width="20" height="24" viewBox="0 0 20 24"><path d="M0 0l20 12L0 24z" fill="#222" /></svg>
          <GhostVolume width="28" height="28" viewBox="0 0 28 28" fill="#222">
            <path d="M0 9h6l9-8v26l-9-8H0z" /><path d="M18 8q6 6 0 12M18 2q13 12 0 24" fill="none" stroke="#222" strokeWidth="3" />
          </GhostVolume>
          <GhostTime>6:17 / 6:21</GhostTime>
          <GhostControls>
            <svg width="27" height="22" viewBox="0 0 27 22"><rect width="27" height="22" rx="3" fill="#222" /><path d="M4 12h5M12 12h11M4 17h11M18 17h5" stroke="#0a0a0a" strokeWidth="2.500" /></svg>
            <svg width="34" height="24" viewBox="0 0 34 24">
              <circle cx="12" cy="13" r="6.500" fill="none" stroke="#222" strokeWidth="5" />
              <path d="M12 2v4M12 20v4M1 13h4M19 13h4M4 5l3 3M17 18l3 3M20 5l-3 3M7 18l-3 3" stroke="#222" strokeWidth="4" />
              <rect x="12" y="0" width="20" height="14" rx="2" fill="#3a0505" />
            </svg>
            <svg width="24" height="24" viewBox="0 0 24 24" fill="none" stroke="#222" strokeWidth="3"><path d="M0 8h8V0M16 0v8h8M0 16h8v8M24 16h-8v8" /></svg>
          </GhostControls>
        </Ghost>
        <AppButton $first aria-label="Start"><WinLogo s={16} c="#fff" /></AppButton>
        <AppButton $first aria-label="Search"><svg width="17" height="17" viewBox="0 0 17 17" fill="none" stroke="#fff" strokeWidth="1.500"><circle cx="10.500" cy="6.500" r="5.500" /><path d="M6.500 10.500L.8 16.200" /></svg></AppButton>
        <AppButton $first aria-label="Task view"><TaskView s={20} c="#fff" /></AppButton>
        <AppGroup>
          <AppButton aria-label="Parrot"><Parrot /></AppButton>
          <AppButton aria-label="Dreamweaver"><Dreamweaver /></AppButton>
          <AppButton aria-label="Calculator"><Calc /></AppButton>
          <AppButton aria-label="XAMPP"><Xampp /></AppButton>
          <AppButton aria-label="Command prompt"><Cmd /></AppButton>
          <AppButton $line="short" aria-label="Paint"><Paint /></AppButton>
          <AppButton aria-label="File Explorer"><Folder s={22} /></AppButton>
          <AppButton $bg="#353535" $line="full" aria-label="Chrome"><Chrome s={22} /></AppButton>
          <AppButton $bg="#1c1c1c" $line="full" aria-label="Sublime Text"><Sublime /></AppButton>
          <AppButton $line="short" aria-label="Sticky Notes"><Sticky /></AppButton>
          <AppButton $line="short" aria-label="Mail"><Mail /><Badge $x={19} $y={19}>99+</Badge></AppButton>
          <AppButton $line="short" aria-label="Word"><Word /></AppButton>
        </AppGroup>
        <Tray>
          <TrayItem $w={48} aria-label="People"><svg width="15" height="17" viewBox="0 0 15 17" fill="none" stroke="#fff" strokeWidth="1.200"><circle cx="10" cy="4" r="3" /><circle cx="4.500" cy="8.500" r="2.500" /><path d="M.7 16q.3-5 3.800-5t4 5M8.500 8.500q5-1.500 5.800 5" /></svg></TrayItem>
          <TrayItem $w={24} aria-label="Hidden icons"><ChevUp c="#fff" /></TrayItem>
          <TrayItem $w={24} aria-label="Battery"><Battery /></TrayItem>
          <TrayItem $w={24} aria-label="Network"><Wifi /></TrayItem>
          <TrayItem $w={26} aria-label="Volume"><Speaker /></TrayItem>
          <TrayItem $w={27} aria-label="Pen"><svg width="17" height="17" viewBox="0 0 17 17" fill="none" stroke="#fff" strokeWidth="1.300"><path d="M5 12L11.500 1.500q2-1 3 .7L8 12l-3 2zM5 8q-4 0-4 4 0 4 4 3.500L10 12h2q0 2 4-1" /></svg></TrayItem>
          <TrayItem $w={41}>ENG</TrayItem>
          <Clock>12:29 AM<br />5/22/2018</Clock>
          <TrayItem $w={52} aria-label="Notifications"><svg width="16" height="16" viewBox="0 0 16 16"><path d="M0 0h16v12h-5v4l-4-4H0z" fill="#fff" /><path d="M3 3.500h10M3 6h10M3 8.500h6" stroke="#000" /></svg><Badge $x={24} $y={19}>2</Badge></TrayItem>
          <ShowDesktop aria-label="Show desktop" />
        </Tray>
      </Taskbar>
    </Page>
  );
}
